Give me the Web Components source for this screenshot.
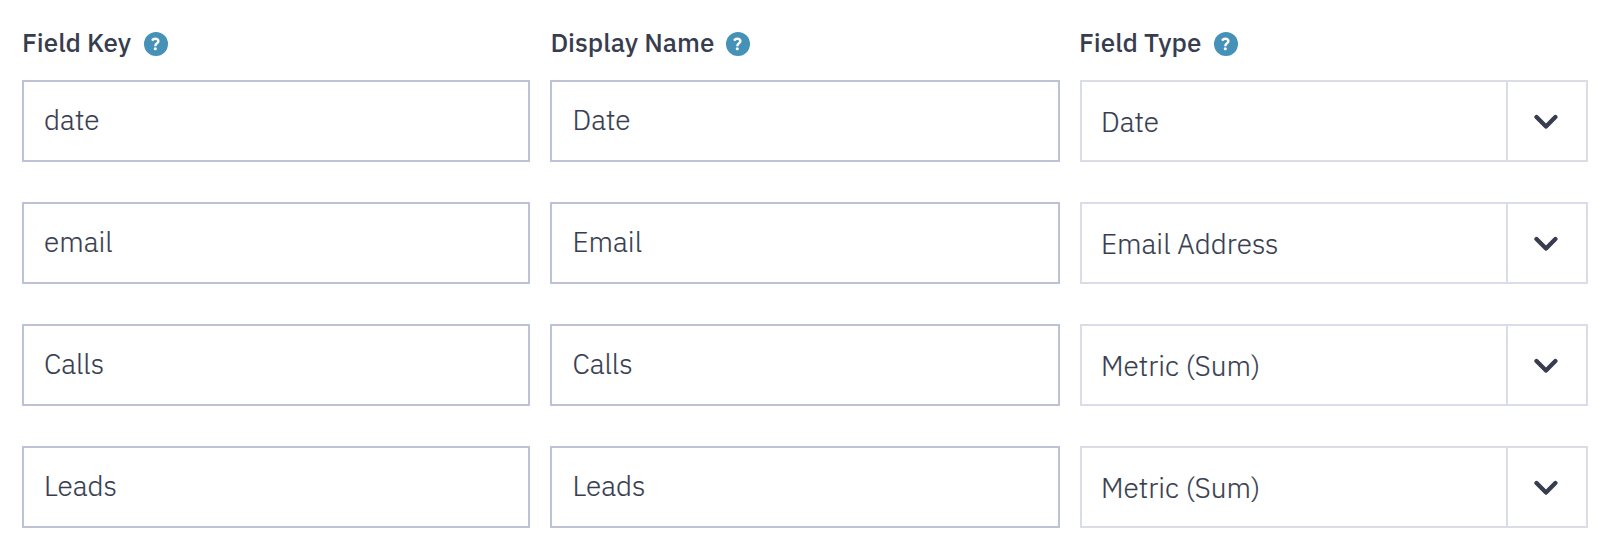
<!DOCTYPE html>
<html lang="en"><head><meta charset="utf-8"><title>Fields</title>
<style>
body{margin:0;background:#fff;color:#373d4f;font-family:"IBM Plex Sans",Roboto,sans-serif}
</style></head><body>
<field-table></field-table>
<script>
const define = (name, html) => customElements.define(name, class extends HTMLElement {
  connectedCallback() {
    if (this.shadowRoot) return;
    const t = document.createElement('template');
    t.innerHTML = html;
    this.attachShadow({mode: 'open'}).append(t.content.cloneNode(true));
  }
});

define('help-icon', `<style>:host{display:block;width:24px;height:24px}svg{display:block}</style>
<svg width="24" height="24" viewBox="0 0 24 24"><circle cx="12" cy="12" r="12" fill="#4691b8"/>
<path d="M8.1 8.6C8.8 7.4 9.9 6.8 11.3 6.8C13.3 6.8 14.4 7.8 14.4 9.3C14.4 11.5 11.3 11.2 11.3 14.2" fill="none" stroke="#fff" stroke-width="2.4"/><circle cx="11.3" cy="16.8" r="1.55" fill="#fff"/></svg>`);

define('field-label', `<style>:host{display:flex;height:24px;font-size:26px;font-weight:500;white-space:nowrap}
span{display:block;line-height:30px;height:30px;margin-top:-5px;width:var(--label-width);text-indent:var(--indent,0)}</style>
<span><slot></slot></span><help-icon></help-icon>`);

define('text-field', `<style>:host{display:block;box-sizing:border-box;height:82px;border:2px solid #bec2d6;padding:21px 20px 0;font-size:28px;line-height:34px;font-weight:300;white-space:nowrap;-webkit-text-stroke:.2px #373d4f}</style><slot></slot>`);

define('select-field', `<style>:host{display:flex;box-sizing:border-box;height:82px;border:2px solid #dadce8;font-size:28px;line-height:34px;font-weight:300;white-space:nowrap;-webkit-text-stroke:.2px #373d4f}
.value{flex:1;padding:23px 19px 0}
.arrow{width:78px;border-left:2px solid #dadce8;display:grid;place-items:center}</style>
<div class="value"><slot></slot></div>
<div class="arrow"><svg width="26" height="18" viewBox="0 0 26 18"><path d="M2.5 5.1L12 14.6L21.4 5.1" fill="none" stroke="#373d4f" stroke-width="4.3" stroke-linecap="round" stroke-linejoin="round"/></svg></div>`);

define('field-table', `<style>
:host{display:grid;box-sizing:border-box;width:1602px;height:544px;padding:32px 14px 16px 22px;grid-template-columns:508px 510px 508px;grid-template-rows:8px repeat(4,82px);column-gap:20px;row-gap:40px}
.second{padding-left:20.5px}
</style>
<field-label style="--label-width:122px">Field Key</field-label>
<field-label style="--label-width:176px;--indent:.4px">Display Name</field-label>
<field-label style="--label-width:134px;--indent:-1px">Field Type</field-label>
<text-field>date</text-field><text-field class="second">Date</text-field><select-field>Date</select-field>
<text-field>email</text-field><text-field class="second">Email</text-field><select-field>Email Address</select-field>
<text-field>Calls</text-field><text-field class="second">Calls</text-field><select-field>Metric (Sum)</select-field>
<text-field>Leads</text-field><text-field class="second">Leads</text-field><select-field>Metric (Sum)</select-field>`);
</script>
</body></html>
